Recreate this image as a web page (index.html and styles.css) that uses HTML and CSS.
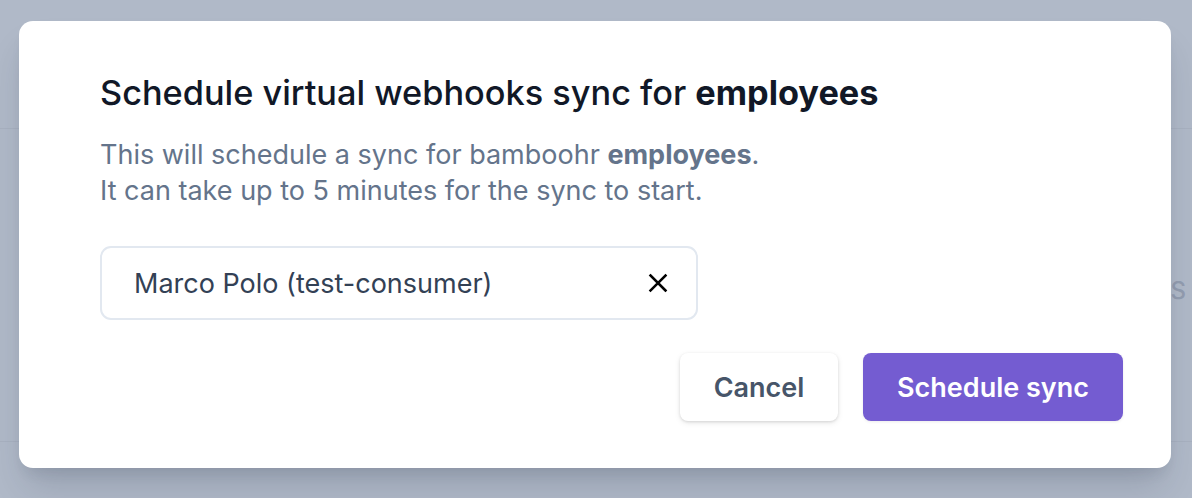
FILE: index.html
```html
<!DOCTYPE html>
<html lang="en">
<head>
<meta charset="utf-8">
<title>Schedule sync</title>
<link rel="stylesheet" href="styles.css">
</head>
<body>
<div class="page">
  <div class="page-row page-row-top"></div>
  <div class="page-row page-row-mid"><span class="bg-text">S</span></div>
  <div class="page-row page-row-bottom"></div>
</div>
<div class="modal" role="dialog">
  <div class="modal-body">
    <h2 class="title">Schedule virtual webhooks sync for <strong>employees</strong></h2>
    <p class="desc">This will schedule a sync for bamboohr <strong>employees</strong>.<br>It can take up to 5 minutes for the sync to start.</p>
    <div class="select">
      <span class="select-value">Marco Polo (test-consumer)</span>
      <svg class="clear-icon" width="20" height="20" viewBox="0 0 20 20" fill="none" stroke="#000" stroke-width="2.5" stroke-linecap="square">
        <path d="M2.5 2.5 L17.5 17.5 M17.5 2.5 L2.5 17.5"/>
      </svg>
    </div>
  </div>
  <div class="actions">
    <button class="btn btn-cancel">Cancel</button>
    <button class="btn btn-primary">Schedule sync</button>
  </div>
</div>
</body>
</html>
```
FILE: styles.css
```css
* { box-sizing: border-box; }
html, body { margin: 0; padding: 0; }
body {
  width: 1192px;
  height: 498px;
  overflow: hidden;
  background: #b0b9c8;
  font-family: Inter, "Noto Sans", "Liberation Sans", sans-serif;
  position: relative;
}
.page {
  display: flex;
  flex-direction: column;
}
.page-row-top {
  height: 129px;
  border-bottom: 1px solid #a8b1c0;
}
.page-row-mid {
  height: 313px;
  border-bottom: 1px solid #a8b1c0;
  display: flex;
  justify-content: flex-end;
  align-items: center;
  padding-right: 6px;
}
.bg-text {
  color: #939db0;
  font-size: 24px;
  font-weight: 500;
  margin-top: 10px;
}
.modal {
  position: absolute;
  left: 19px;
  top: 21px;
  width: 1152px;
  height: 447px;
  background: #fff;
  border-radius: 14px;
  box-shadow: 0 24px 36px -8px rgba(30, 41, 59, 0.18), 0 10px 14px -6px rgba(30, 41, 59, 0.10);
  display: flex;
  flex-direction: column;
}
.modal-body {
  padding: 47px 48px 0 81px;
}
.title {
  margin: 0;
  font-size: 34.3px;
  line-height: 50px;
  font-weight: 500;
  color: #111827;
}
.title strong { font-weight: 700; }
.desc {
  margin: 19px 0 0;
  font-size: 27px;
  line-height: 36px;
  color: #64748b;
}
.desc strong { font-weight: 700; }
.select {
  margin-top: 37px;
  width: 598px;
  height: 74px;
  border: 2px solid #e2e8f0;
  border-radius: 11px;
  display: flex;
  align-items: center;
  justify-content: space-between;
  padding: 0 28px 0 32px;
}
.select-value {
  font-size: 27px;
  color: #334155;
}
.clear-icon { display: block; }
.actions {
  display: flex;
  justify-content: flex-end;
  gap: 25px;
  padding: 33px 48px 0 0;
}
.btn {
  height: 68px;
  border: none;
  border-radius: 8px;
  font-family: inherit;
  font-size: 27px;
  font-weight: 600;
  cursor: pointer;
}
.btn-cancel {
  width: 158px;
  background: #fff;
  color: #475569;
  box-shadow: 0 1px 3px rgba(0,0,0,0.12), 0 2px 6px rgba(0,0,0,0.08);
}
.btn-primary {
  width: 260px;
  background: #745cd1;
  color: #fff;
  box-shadow: 0 1px 3px rgba(0,0,0,0.08);
}
```
